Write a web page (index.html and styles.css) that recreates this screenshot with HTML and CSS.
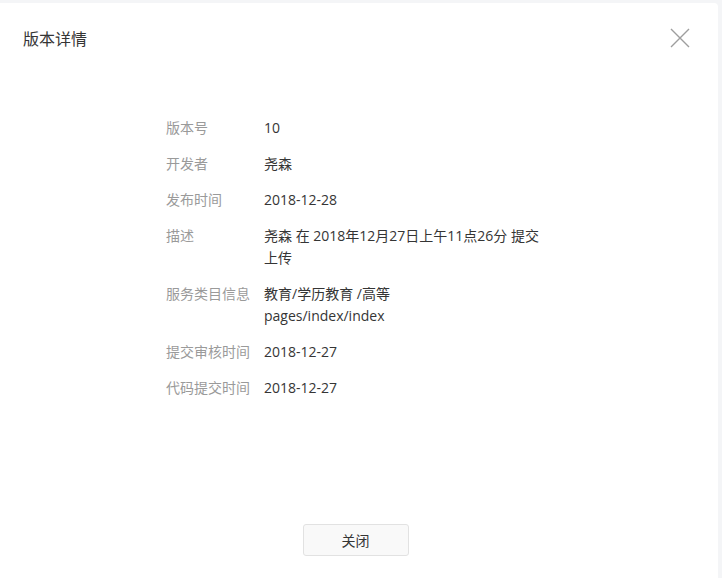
FILE: index.html
```html
<!DOCTYPE html>
<html lang="zh-CN">
<head>
    <meta charset="UTF-8">
    <title>版本详情</title>
    <link rel="stylesheet" href="styles.css">
</head>
<body>
    <div class="dialog">
        <div class="dialog-header">
            <h3 class="dialog-title">版本详情</h3>
            <button class="dialog-close" aria-label="关闭">
                <svg width="20" height="20" viewBox="0 0 20 20">
                    <path d="M1 1 L19 19 M19 1 L1 19" stroke="#9e9e9e" stroke-width="1.4" fill="none"/>
                </svg>
            </button>
        </div>

        <div class="dialog-body">
            <dl class="info-list">
                <div class="info-row">
                    <dt>版本号</dt>
                    <dd>10</dd>
                </div>
                <div class="info-row">
                    <dt>开发者</dt>
                    <dd>尧森</dd>
                </div>
                <div class="info-row">
                    <dt>发布时间</dt>
                    <dd>2018-12-28</dd>
                </div>
                <div class="info-row">
                    <dt>描述</dt>
                    <dd>尧森 在 2018年12月27日上午11点26分 提交上传</dd>
                </div>
                <div class="info-row">
                    <dt>服务类目信息</dt>
                    <dd>教育/学历教育 /高等<br>pages/index/index</dd>
                </div>
                <div class="info-row">
                    <dt>提交审核时间</dt>
                    <dd>2018-12-27</dd>
                </div>
                <div class="info-row">
                    <dt>代码提交时间</dt>
                    <dd>2018-12-27</dd>
                </div>
            </dl>
        </div>

        <div class="dialog-footer">
            <button class="btn-default">关闭</button>
        </div>
    </div>
</body>
</html>
```

FILE: styles.css
```css
* {
    margin: 0;
    padding: 0;
    box-sizing: border-box;
}

body {
    font-family: "Open Sans", "Noto Sans CJK SC", sans-serif;
    background: #f4f5f7;
    color: #353535;
    overflow: hidden;
    padding-top: 3px;
}

.dialog {
    width: 718px;
    height: 575px;
    background: #fff;
    border-radius: 0 4px 0 0;
    display: flex;
    flex-direction: column;
}

.dialog-header {
    height: 70px;
    padding: 0 28px 0 23px;
    display: flex;
    align-items: center;
    justify-content: space-between;
}

.dialog-title {
    font-size: 16px;
    font-weight: normal;
    color: #353535;
}

.dialog-close {
    border: none;
    background: none;
    width: 20px;
    height: 20px;
    cursor: pointer;
}

.dialog-body {
    flex: 1;
    padding-top: 44px;
}

.info-list {
    width: 384px;
    margin-left: 166px;
    font-size: 14px;
    line-height: 22px;
}

.info-row {
    display: flex;
    margin-bottom: 14px;
}

.info-row dt {
    width: 98px;
    flex-shrink: 0;
    color: #9a9a9a;
}

.info-row dd {
    width: 286px;
    color: #353535;
}

.dialog-footer {
    display: flex;
    justify-content: center;
    padding: 0 7px 22px 0;
}

.btn-default {
    width: 106px;
    height: 32px;
    border: 1px solid #e2e2e2;
    border-radius: 3px;
    background: #f9f9f9;
    font-family: inherit;
    font-size: 14px;
    color: #353535;
}
```
